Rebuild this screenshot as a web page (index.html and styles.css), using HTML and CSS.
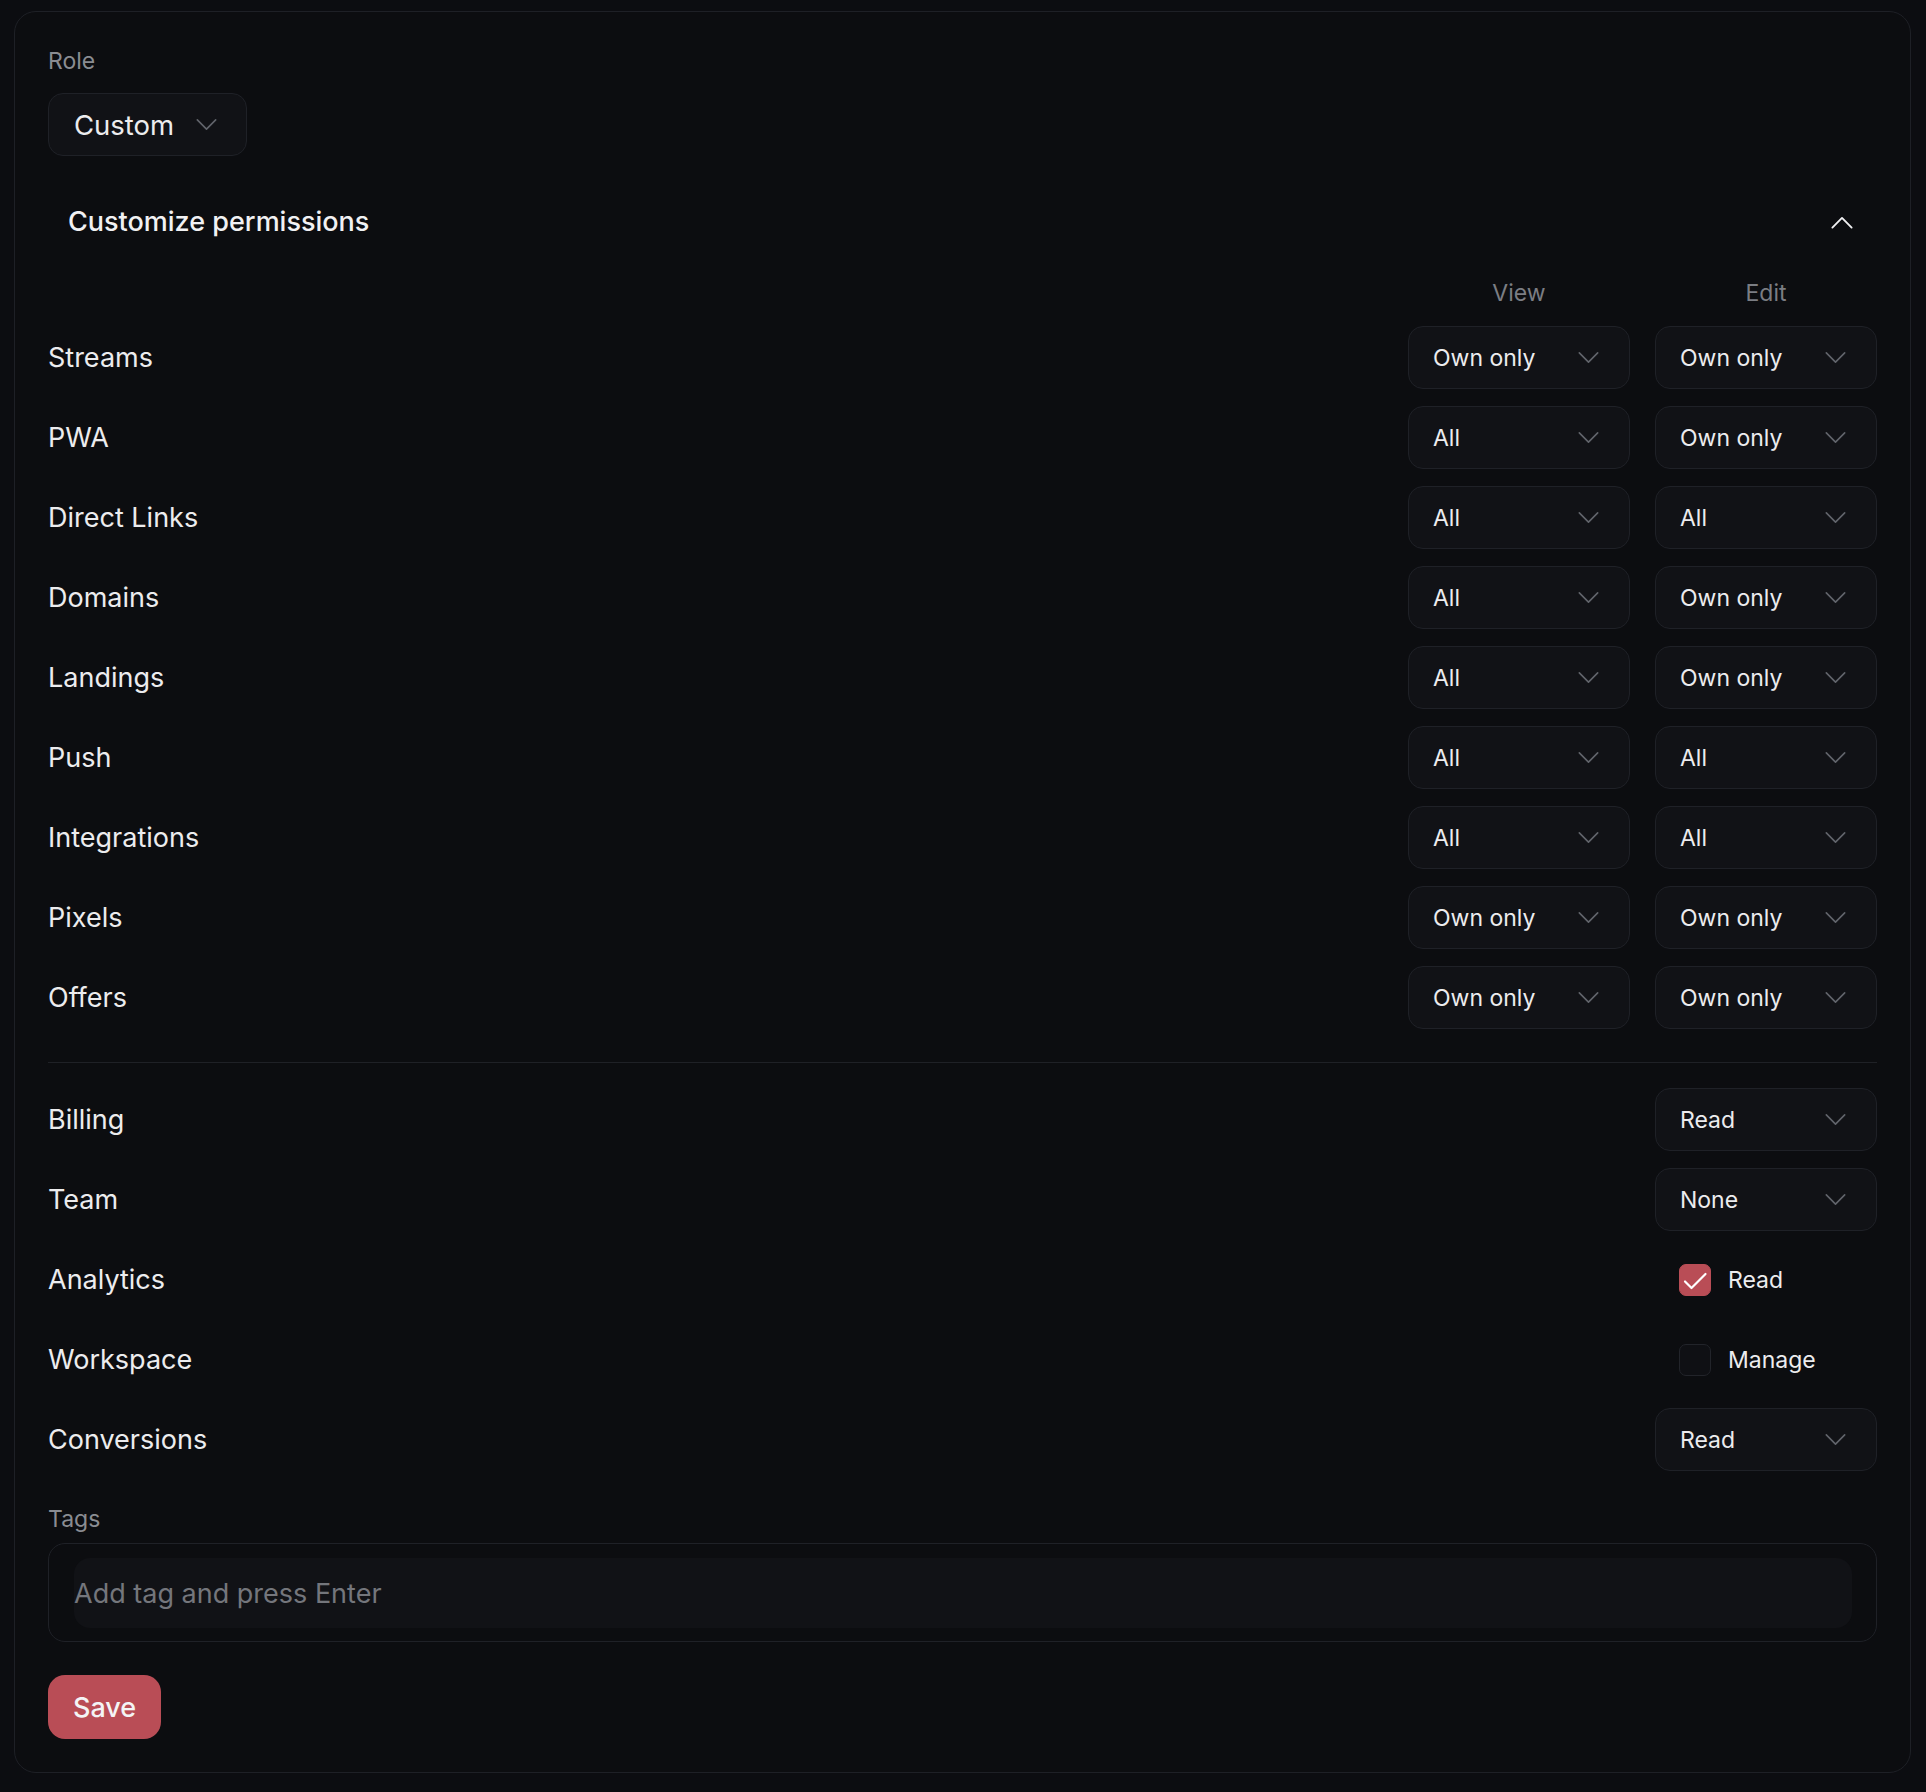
FILE: index.html
```html
<!DOCTYPE html>
<html lang="en">
<head>
<meta charset="utf-8">
<title>Role permissions</title>
<link rel="stylesheet" href="styles.css">
</head>
<body>
<div class="card">
  <div class="field-label">Role</div>
  <div class="select select-role">
    <span class="select-value">Custom</span>
    <svg class="chev" viewBox="0 0 22 12" width="21" height="11"><path d="M1 1L11 11L21 1"/></svg>
  </div>

  <div class="section-head">
    <span class="section-title">Customize permissions</span>
    <svg class="chev-up" viewBox="0 0 24 14" width="22" height="13"><path d="M1.5 12.5L12 2L22.5 12.5"/></svg>
  </div>

  <div class="perm-list">
    <div class="perm-row perm-headrow">
      <span></span>
      <span class="col-head">View</span>
      <span class="col-head">Edit</span>
    </div>

    <div class="perm-row">
      <span class="perm-name">Streams</span>
      <div class="select"><span class="select-value">Own only</span><svg class="chev" viewBox="0 0 22 12" width="21" height="11"><path d="M1 1L11 11L21 1"/></svg></div>
      <div class="select"><span class="select-value">Own only</span><svg class="chev" viewBox="0 0 22 12" width="21" height="11"><path d="M1 1L11 11L21 1"/></svg></div>
    </div>
    <div class="perm-row">
      <span class="perm-name">PWA</span>
      <div class="select"><span class="select-value">All</span><svg class="chev" viewBox="0 0 22 12" width="21" height="11"><path d="M1 1L11 11L21 1"/></svg></div>
      <div class="select"><span class="select-value">Own only</span><svg class="chev" viewBox="0 0 22 12" width="21" height="11"><path d="M1 1L11 11L21 1"/></svg></div>
    </div>
    <div class="perm-row">
      <span class="perm-name">Direct Links</span>
      <div class="select"><span class="select-value">All</span><svg class="chev" viewBox="0 0 22 12" width="21" height="11"><path d="M1 1L11 11L21 1"/></svg></div>
      <div class="select"><span class="select-value">All</span><svg class="chev" viewBox="0 0 22 12" width="21" height="11"><path d="M1 1L11 11L21 1"/></svg></div>
    </div>
    <div class="perm-row">
      <span class="perm-name">Domains</span>
      <div class="select"><span class="select-value">All</span><svg class="chev" viewBox="0 0 22 12" width="21" height="11"><path d="M1 1L11 11L21 1"/></svg></div>
      <div class="select"><span class="select-value">Own only</span><svg class="chev" viewBox="0 0 22 12" width="21" height="11"><path d="M1 1L11 11L21 1"/></svg></div>
    </div>
    <div class="perm-row">
      <span class="perm-name">Landings</span>
      <div class="select"><span class="select-value">All</span><svg class="chev" viewBox="0 0 22 12" width="21" height="11"><path d="M1 1L11 11L21 1"/></svg></div>
      <div class="select"><span class="select-value">Own only</span><svg class="chev" viewBox="0 0 22 12" width="21" height="11"><path d="M1 1L11 11L21 1"/></svg></div>
    </div>
    <div class="perm-row">
      <span class="perm-name">Push</span>
      <div class="select"><span class="select-value">All</span><svg class="chev" viewBox="0 0 22 12" width="21" height="11"><path d="M1 1L11 11L21 1"/></svg></div>
      <div class="select"><span class="select-value">All</span><svg class="chev" viewBox="0 0 22 12" width="21" height="11"><path d="M1 1L11 11L21 1"/></svg></div>
    </div>
    <div class="perm-row">
      <span class="perm-name">Integrations</span>
      <div class="select"><span class="select-value">All</span><svg class="chev" viewBox="0 0 22 12" width="21" height="11"><path d="M1 1L11 11L21 1"/></svg></div>
      <div class="select"><span class="select-value">All</span><svg class="chev" viewBox="0 0 22 12" width="21" height="11"><path d="M1 1L11 11L21 1"/></svg></div>
    </div>
    <div class="perm-row">
      <span class="perm-name">Pixels</span>
      <div class="select"><span class="select-value">Own only</span><svg class="chev" viewBox="0 0 22 12" width="21" height="11"><path d="M1 1L11 11L21 1"/></svg></div>
      <div class="select"><span class="select-value">Own only</span><svg class="chev" viewBox="0 0 22 12" width="21" height="11"><path d="M1 1L11 11L21 1"/></svg></div>
    </div>
    <div class="perm-row">
      <span class="perm-name">Offers</span>
      <div class="select"><span class="select-value">Own only</span><svg class="chev" viewBox="0 0 22 12" width="21" height="11"><path d="M1 1L11 11L21 1"/></svg></div>
      <div class="select"><span class="select-value">Own only</span><svg class="chev" viewBox="0 0 22 12" width="21" height="11"><path d="M1 1L11 11L21 1"/></svg></div>
    </div>
  </div>

  <div class="divider"></div>

  <div class="perm-list">
    <div class="perm-row">
      <span class="perm-name">Billing</span>
      <div class="select col-edit"><span class="select-value">Read</span><svg class="chev" viewBox="0 0 22 12" width="21" height="11"><path d="M1 1L11 11L21 1"/></svg></div>
    </div>
    <div class="perm-row">
      <span class="perm-name">Team</span>
      <div class="select col-edit"><span class="select-value">None</span><svg class="chev" viewBox="0 0 22 12" width="21" height="11"><path d="M1 1L11 11L21 1"/></svg></div>
    </div>
    <div class="perm-row">
      <span class="perm-name">Analytics</span>
      <label class="check col-edit">
        <span class="box box-on"><svg viewBox="0 0 32 32" width="32" height="32"><path d="M6 17.5L12.5 24L26.5 10"/></svg></span>
        <span class="check-text">Read</span>
      </label>
    </div>
    <div class="perm-row">
      <span class="perm-name">Workspace</span>
      <label class="check col-edit">
        <span class="box"></span>
        <span class="check-text">Manage</span>
      </label>
    </div>
    <div class="perm-row">
      <span class="perm-name">Conversions</span>
      <div class="select col-edit"><span class="select-value">Read</span><svg class="chev" viewBox="0 0 22 12" width="21" height="11"><path d="M1 1L11 11L21 1"/></svg></div>
    </div>
  </div>

  <div class="field-label tags-label">Tags</div>
  <div class="tags-box">
    <div class="tags-input">Add tag and press Enter</div>
  </div>

  <button class="save-btn" type="button">Save</button>
</div>
</body>
</html>
```

FILE: styles.css
```css
* {
  box-sizing: border-box;
}

html, body {
  background: #0c0d11;
}

body {
  margin: 0;
  padding: 11px 15px 20px 14px;
  font-family: Inter, "Noto Sans", "Liberation Sans", sans-serif;
  color: #ececee;
}

.card {
  border: 1px solid #1e2026;
  border-radius: 22px;
  background: #0c0d10;
  padding: 33px;
}

.field-label {
  font-size: 23px;
  line-height: 32px;
  color: #8a8c92;
}

.select {
  height: 63px;
  border: 1px solid #1f2127;
  border-radius: 15px;
  background: #111216;
  display: flex;
  align-items: center;
  justify-content: space-between;
  padding: 0 30px 0 24px;
}

.select-value {
  font-size: 23px;
  line-height: 32px;
  color: #ececee;
}

.select-role {
  display: inline-flex;
  margin-top: 16px;
  justify-content: flex-start;
  gap: 22px;
  width: 199px;
  padding-left: 25px;
}

.select-role .select-value {
  font-size: 27.5px;
}

.chev {
  fill: none;
  stroke: #62656c;
  stroke-width: 1.7;
  stroke-linecap: round;
  stroke-linejoin: round;
  flex: none;
}

.section-head {
  margin-top: 36px;
  height: 60px;
  display: flex;
  align-items: center;
  justify-content: space-between;
  padding: 0 24px 0 20px;
}

.section-title {
  font-size: 27px;
  font-weight: 500;
  line-height: 32px;
  color: #f1f1f3;
}

.chev-up {
  fill: none;
  stroke: #f1f1f3;
  stroke-width: 2;
  stroke-linecap: round;
  stroke-linejoin: round;
}

.perm-list {
  display: flex;
  flex-direction: column;
  gap: 17px;
}

.section-head + .perm-list {
  margin-top: 25px;
}

.perm-row {
  display: grid;
  grid-template-columns: 1fr 222px 222px;
  column-gap: 25px;
  align-items: center;
  height: 63px;
}

.perm-headrow {
  height: 32px;
}

.col-head {
  text-align: center;
  font-size: 23px;
  line-height: 32px;
  color: #7b7d83;
}

.perm-name {
  font-size: 27px;
  line-height: 32px;
  color: #ececee;
}

.col-edit {
  grid-column: 3;
}

.divider {
  height: 1px;
  background: #1f2126;
  margin: 33px 0 25px;
}

.check {
  display: flex;
  align-items: center;
  gap: 17px;
  padding-left: 24px;
  height: 63px;
}

.box {
  width: 32px;
  height: 32px;
  border-radius: 7px;
  border: 1px solid #22242a;
  background: #0f1014;
  flex: none;
  display: flex;
}

.box-on {
  background: #b94d56;
  border-color: #b94d56;
}

.box-on svg {
  margin: -1px;
  fill: none;
  stroke: #ffffff;
  stroke-width: 2.2;
  stroke-linecap: round;
  stroke-linejoin: round;
}

.check-text {
  font-size: 23px;
  line-height: 32px;
  color: #ececee;
}

.tags-label {
  margin-top: 32px;
}

.tags-box {
  margin-top: 8px;
  border: 1px solid #1f2127;
  border-radius: 17px;
  padding: 14px 24px 13px 25px;
  background: #0c0d10;
}

.tags-input {
  height: 70px;
  border-radius: 16px;
  background: #111216;
  display: flex;
  align-items: center;
  font-size: 27px;
  color: #74767c;
}

.save-btn {
  margin-top: 33px;
  height: 64px;
  padding: 0 25px;
  border: none;
  border-radius: 17px;
  background: #b94d56;
  color: #f4f4f5;
  font-family: Inter, "Noto Sans", "Liberation Sans", sans-serif;
  font-size: 27px;
  font-weight: 500;
  display: block;
}
```
